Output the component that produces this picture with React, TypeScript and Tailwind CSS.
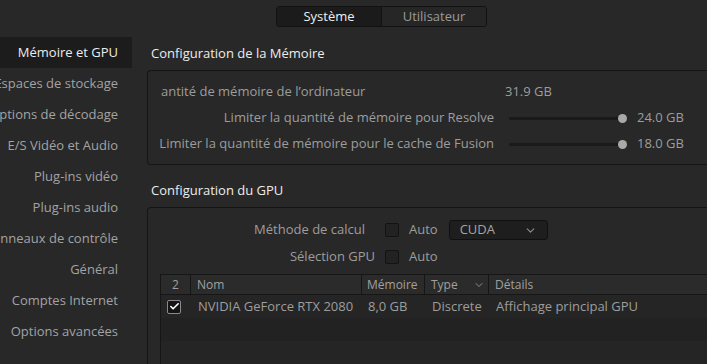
import { Check, ChevronDown } from 'lucide-react';

const navItems = [
    'Mémoire et GPU',
    'Espaces de stockage',
    'Options de décodage',
    'E/S Vidéo et Audio',
    'Plug-ins vidéo',
    'Plug-ins audio',
    'Panneaux de contrôle',
    'Général',
    'Comptes Internet',
    'Options avancées',
];

function Slider({ value }: { value: string }) {
    return (
        <>
            <div className="relative h-[26px] flex items-center pl-[4px] pr-[6px]">
                <div className="h-[3px] w-full bg-[#1a1a1a] rounded-full" />
                <div className="absolute right-[1px] w-[9px] h-[9px] rounded-full bg-[#a9a9a9]" />
            </div>
            <div className="h-[26px] flex items-center pl-[9px] text-[#9d9d9d]">{value}</div>
        </>
    );
}

function Box({ checked = false }: { checked?: boolean }) {
    return (
        <div
            className={`w-[14px] h-[14px] rounded-[2px] border flex items-center justify-center ${
                checked ? 'border-[#8a8a8a] bg-[#141414]' : 'border-[#131313] bg-[#222222]'
            }`}
        >
            {checked && <Check size={11} strokeWidth={3.5} className="text-white" />}
        </div>
    );
}

export default function App() {
    return (
        <div className="w-[707px] h-[364px] overflow-hidden bg-[#282828] font-['Open_Sans',sans-serif] text-[13px] text-[#9d9d9d]">
            {/* onglets */}
            <div className="h-[37px] pt-[6px] pl-[276px]">
                <div className="flex w-[211px] h-[21px] border border-[#121212] rounded-[3px] overflow-hidden">
                    <div className="w-[105px] flex items-center justify-center bg-[#1b1b1b] text-[#eeeeee] border-r border-[#121212]">
                        Système
                    </div>
                    <div className="flex-1 flex items-center justify-center bg-[#262626] text-[#9a9a9a]">
                        Utilisateur
                    </div>
                </div>
            </div>

            <div className="flex">
                {/* menu */}
                <div className="w-[132px] shrink-0">
                    {navItems.map((item, i) => (
                        <div
                            key={item}
                            className={`h-[31px] flex items-center justify-end pr-[14px] whitespace-nowrap ${
                                i === 0 ? 'bg-[#1c1c1c] text-[#ececec]' : 'text-[#a3a3a3]'
                            }`}
                        >
                            {item}
                        </div>
                    ))}
                </div>

                <div className="flex-1 pl-[15px] min-w-0">
                    <div className="h-[33px] flex items-center pl-[4px] text-[#ececec] whitespace-nowrap">
                        Configuration de la Mémoire
                    </div>
                    <div className="border border-r-0 border-[#151515] rounded-l-[4px] pt-[8px] pb-[7px] pl-[13px]">
                        <div className="grid grid-cols-[344px_123px_1fr] whitespace-nowrap">
                            <div className="h-[26px] flex items-center overflow-hidden">antité de mémoire de l’ordinateur</div>
                            <div className="h-[26px] flex items-center">31.9 GB</div>
                            <div />
                            <div className="h-[26px] flex items-center justify-end pr-[11px]">Limiter la quantité de mémoire pour Resolve</div>
                            <Slider value="24.0 GB" />
                            <div className="h-[26px] flex items-center justify-end pr-[11px]">Limiter la quantité de mémoire pour le cache de Fusion</div>
                            <Slider value="18.0 GB" />
                        </div>
                    </div>

                    <div className="h-[42px] pt-[10px] flex items-center pl-[4px] text-[#ececec]">
                        Configuration du GPU
                    </div>
                    <div className="border border-r-0 border-b-0 border-[#151515] rounded-tl-[4px] pt-[9px] h-[200px]">
                        <div className="flex items-center h-[26px]">
                            <div className="w-[217px] text-right">Méthode de calcul</div>
                            <div className="ml-[20px]"><Box /></div>
                            <div className="ml-[10px]">Auto</div>
                            <div className="ml-[11px] w-[99px] h-[20px] flex items-center justify-between pl-[10px] pr-[10px] bg-[#1e1e1e] border border-[#101010] rounded-[3px] text-[#a5a5a5]">
                                CUDA
                                <ChevronDown size={13} className="text-[#8d8d8d]" />
                            </div>
                        </div>
                        <div className="flex items-center h-[26px] mt-[1px]">
                            <div className="w-[227px] text-right">Sélection GPU</div>
                            <div className="ml-[10px]"><Box /></div>
                            <div className="ml-[10px]">Auto</div>
                        </div>

                        {/* tableau */}
                        <div className="mt-[4px] ml-[12px] border-l border-[#161616] whitespace-nowrap">
                            <div className="grid grid-cols-[30px_171px_63px_64px_1fr] h-[21px] bg-[#2b2b2b] border-b border-t border-[#161616] text-[12px] text-[#a0a0a0]">
                                <div className="flex items-center justify-center border-r border-[#161616]">2</div>
                                <div className="flex items-center pl-[6px] border-r border-[#161616]">Nom</div>
                                <div className="flex items-center pl-[5px] border-r border-[#161616]">Mémoire</div>
                                <div className="flex items-center justify-between pl-[6px] pr-[3px] border-r border-[#161616]">
                                    Type
                                    <ChevronDown size={12} className="text-[#8d8d8d]" />
                                </div>
                                <div className="flex items-center pl-[6px]">Détails</div>
                            </div>
                            <div className="grid grid-cols-[30px_171px_63px_64px_1fr] h-[23px] bg-[#252525]">
                                <div className="flex items-center pl-[6px]"><Box checked /></div>
                                <div className="flex items-center pl-[7px]">NVIDIA GeForce RTX 2080</div>
                                <div className="flex items-center pl-[6px]">8,0 GB</div>
                                <div className="flex items-center pl-[7px]">Discrete</div>
                                <div className="flex items-center pl-[7px]">Affichage principal GPU</div>
                            </div>
                            <div className="h-[23px] bg-[#222222]" />
                            <div className="h-[23px] bg-[#252525]" />
                        </div>
                    </div>
                </div>
            </div>
        </div>
    );
}
